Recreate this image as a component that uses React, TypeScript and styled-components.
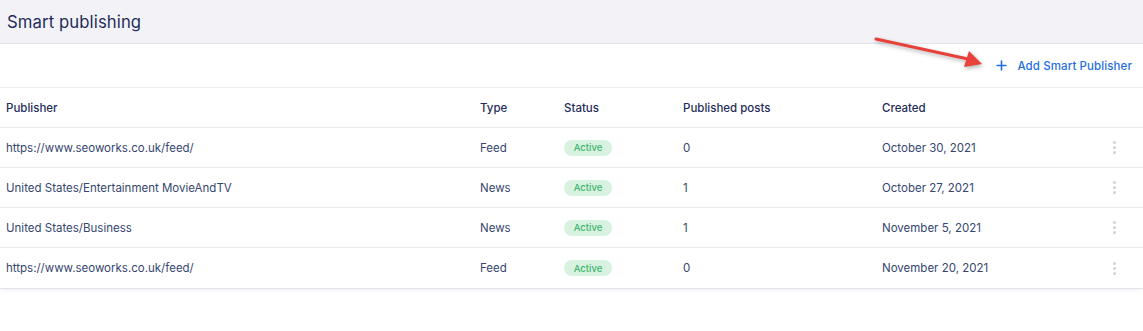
import styled, { createGlobalStyle } from "styled-components";

//====================================================================>

interface PublisherRow {
    publisher: string;
    type: string;
    status: string;
    posts: number;
    created: string;
}

const rows: PublisherRow[] = [
    { publisher: "https://www.seoworks.co.uk/feed/", type: "Feed", status: "Active", posts: 0, created: "October 30, 2021" },
    { publisher: "United States/Entertainment MovieAndTV", type: "News", status: "Active", posts: 1, created: "October 27, 2021" },
    { publisher: "United States/Business", type: "News", status: "Active", posts: 1, created: "November 5, 2021" },
    { publisher: "https://www.seoworks.co.uk/feed/", type: "Feed", status: "Active", posts: 0, created: "November 20, 2021" },
];

//====================================================================>

const GlobalStyle = createGlobalStyle`
    body {
        margin: 0;
        background: #ffffff;
        font-family: "Inter", "Noto Sans", sans-serif;
        color: #2e3c63;
    }
    * { box-sizing: border-box; }
`

const Page = styled.div`
    position: relative;
    width: 1143px;
    height: 331px;
    background: #ffffff;
`

const TitleBar = styled.div`
    height: 44px;
    background: #f3f3f7;
    border-bottom: 1px solid #e4e4ec;
    display: flex;
    align-items: center;
    padding-left: 7px;

    h1 {
        margin: 0;
        font-size: 16.7px;
        font-weight: 400;
        color: #1f2d5a;
        letter-spacing: 0.1px;
    }
`

const Toolbar = styled.div`
    height: 44px;
    border-bottom: 1px solid #ececf2;
    display: flex;
    align-items: center;
    justify-content: flex-end;
    padding-right: 11px;
`

const AddButton = styled.button`
    border: 0;
    background: transparent;
    color: #1f6fe0;
    font-family: inherit;
    font-size: 11.5px;
    font-weight: 500;
    letter-spacing: 0.1px;
    display: flex;
    align-items: center;
    gap: 10px;
    padding: 0;
    cursor: pointer;
`

const Table = styled.div`
    border-bottom: 1px solid #e4e4ec;
    box-shadow: 0 3px 5px -2px rgba(40, 40, 80, 0.08);
`

const Row = styled.div<{ $head?: boolean }>`
    display: grid;
    grid-template-columns: 474px 84px 119px 199px 224px 1fr;
    align-items: center;
    height: 40px;
    padding-left: 6px;
    border-bottom: 1px solid #e9e9f0;
    font-size: 11.5px;
    font-weight: ${(p) => (p.$head ? 500 : 400)};
    color: ${(p) => (p.$head ? "#1f2d5a" : "#36466f")};

    &:last-child {
        border-bottom: 0;
    }
`

const Badge = styled.span`
    display: inline-flex;
    align-items: center;
    justify-content: center;
    width: 48px;
    height: 16px;
    border-radius: 8px;
    background: #d8f2e2;
    color: #3cb46a;
    font-size: 9.5px;
    font-weight: 500;
`

const Kebab = styled.div`
    display: flex;
    flex-direction: column;
    gap: 2px;
    padding-left: 7px;

    span {
        width: 3px;
        height: 3px;
        border-radius: 50%;
        background: #d0d0da;
    }
`

const Arrow = styled.svg`
    position: absolute;
    left: 870px;
    top: 34px;
    pointer-events: none;
    filter: drop-shadow(1px 2px 2px rgba(0, 0, 0, 0.3));
`

//====================================================================>

function App() {
    return (
        <Page>
            <GlobalStyle />
            <TitleBar>
                <h1>Smart publishing</h1>
            </TitleBar>
            <Toolbar>
                <AddButton>
                    <svg width="11" height="11" viewBox="0 0 11 11">
                        <path d="M5.5 0.5v10M0.5 5.5h10" stroke="#1f6fe0" strokeWidth="1.6" />
                    </svg>
                    Add Smart Publisher
                </AddButton>
            </Toolbar>
            <Table>
                <Row $head>
                    <div>Publisher</div>
                    <div>Type</div>
                    <div>Status</div>
                    <div>Published posts</div>
                    <div>Created</div>
                    <div></div>
                </Row>
                {rows.map((r, i) => (
                    <Row key={i}>
                        <div>{r.publisher}</div>
                        <div>{r.type}</div>
                        <div><Badge>{r.status}</Badge></div>
                        <div>{r.posts}</div>
                        <div>{r.created}</div>
                        <div>
                            <Kebab><span /><span /><span /></Kebab>
                        </div>
                    </Row>
                ))}
            </Table>
            <Arrow width="120" height="40" viewBox="0 0 120 40">
                <line x1="6" y1="5" x2="98" y2="25" stroke="#e8403a" strokeWidth="3" strokeLinecap="round" />
                <polygon points="112,30 94,33 99,17" fill="#e8403a" />
            </Arrow>
        </Page>
    )
}
export default App
